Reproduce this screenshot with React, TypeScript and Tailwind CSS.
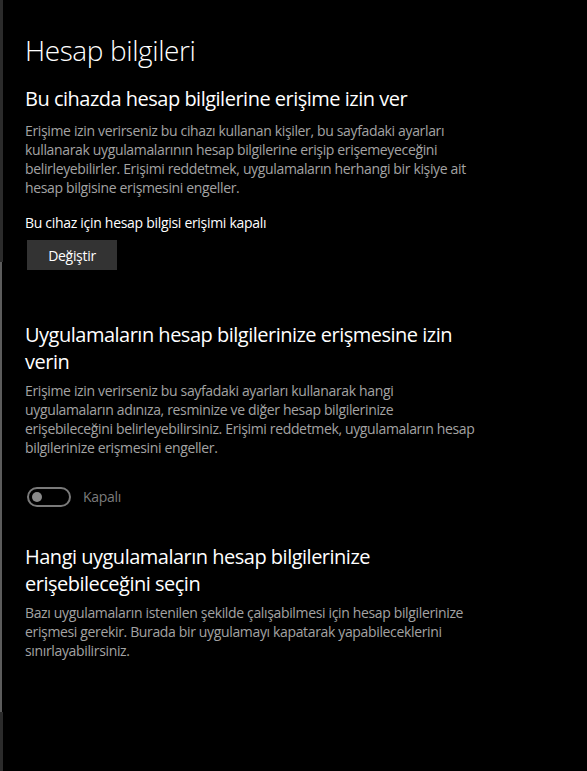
import React from 'react'

const font = { fontFamily: '"Segoe UI", "Open Sans", "Noto Sans", sans-serif' }

function Toggle() {
  return (
    <div className="flex h-[20px] w-[44px] items-center rounded-full border-2 border-[#7a7a7a] px-[3px]">
      <div className="h-[10px] w-[10px] rounded-full bg-[#8a8a8a]" />
    </div>
  )
}

export default function App() {
  return (
    <div className="flex min-h-screen bg-black text-white" style={font}>
      {/* left edge strip */}
      <div className="flex w-[3px] flex-col">
        <div className="h-[262px] bg-[#2b2b2b]" />
        <div className="h-[450px] w-[2px] bg-[#5c5c5c]" />
        <div className="flex-1 bg-[#2b2b2b]" />
      </div>

      <div className="flex-1 pl-[22px] pt-[30px]">
        <h1 className="text-[28px] font-light leading-[40px] tracking-[-0.4px]">Hesap bilgileri</h1>

        {/* Section 1 */}
        <h2 className="mt-[15px] text-[20px] leading-[28px] tracking-[-0.5px]">
          Bu cihazda hesap bilgilerine erişime izin ver
        </h2>
        <p className="mt-[8px] text-[14px] leading-[19px] tracking-[-0.35px] text-[#a3a3a3]">
          Erişime izin verirseniz bu cihazı kullanan kişiler, bu sayfadaki ayarları
          <br />
          kullanarak uygulamalarının hesap bilgilerine erişip erişemeyeceğini
          <br />
          belirleyebilirler. Erişimi reddetmek, uygulamaların herhangi bir kişiye ait
          <br />
          hesap bilgisine erişmesini engeller.
        </p>
        <div className="mt-[16px] text-[14px] leading-[20px] tracking-[-0.3px]">
          Bu cihaz için hesap bilgisi erişimi kapalı
        </div>
        <button className="mt-[7px] ml-[2px] h-[30px] w-[90px] bg-[#333333] text-[14px] tracking-[-0.3px] text-white">
          Değiştir
        </button>

        {/* Section 2 */}
        <h2 className="mt-[51px] text-[20px] leading-[27px] tracking-[-0.5px]">
          Uygulamaların hesap bilgilerinize erişmesine izin
          <br />
          verin
        </h2>
        <p className="mt-[6px] text-[14px] leading-[19px] tracking-[-0.35px] text-[#a3a3a3]">
          Erişime izin verirseniz bu sayfadaki ayarları kullanarak hangi
          <br />
          uygulamaların adınıza, resminize ve diğer hesap bilgilerinize
          <br />
          erişebileceğini belirleyebilirsiniz. Erişimi reddetmek, uygulamaların hesap
          <br />
          bilgilerinize erişmesini engeller.
        </p>
        <div className="mt-[29px] ml-[2px] flex items-center gap-[12px]">
          <Toggle />
          <span className="text-[14px] tracking-[-0.3px] text-[#7c7c7c]">Kapalı</span>
        </div>

        {/* Section 3 */}
        <h2 className="mt-[36px] text-[20px] leading-[27px] tracking-[-0.5px]">
          Hangi uygulamaların hesap bilgilerinize
          <br />
          erişebileceğini seçin
        </h2>
        <p className="mt-[6px] text-[14px] leading-[19px] tracking-[-0.35px] text-[#a3a3a3]">
          Bazı uygulamaların istenilen şekilde çalışabilmesi için hesap bilgilerinize
          <br />
          erişmesi gerekir. Burada bir uygulamayı kapatarak yapabileceklerini
          <br />
          sınırlayabilirsiniz.
        </p>
      </div>
    </div>
  )
}
